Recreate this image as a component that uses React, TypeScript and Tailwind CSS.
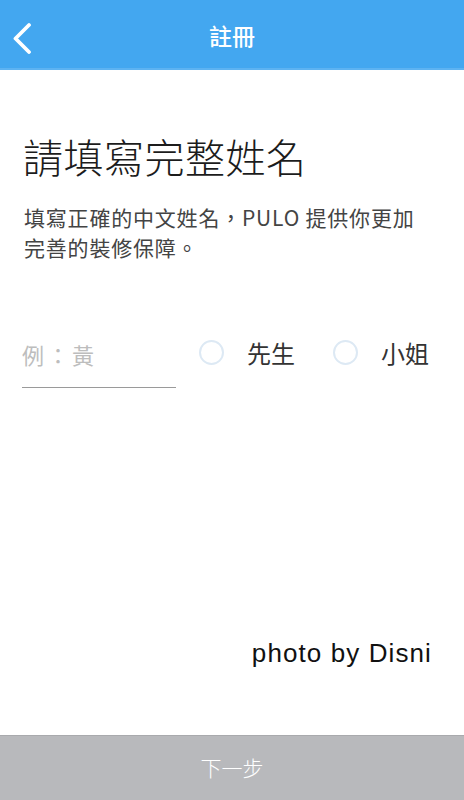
import { useState } from 'react'

const font = { fontFamily: '"Noto Sans CJK TC", "Liberation Sans", sans-serif' }

function Radio({ label, checked, onClick }: { label: string; checked: boolean; onClick: () => void }) {
  return (
    <button onClick={onClick} className="flex items-center gap-[23px]">
      <span className="w-[25px] h-[25px] rounded-full border-2 border-[#dde9f4] flex items-center justify-center">
        {checked && <span className="w-[13px] h-[13px] rounded-full bg-[#43a7f0]" />}
      </span>
      <span className="text-[24px] text-[#333] leading-none">{label}</span>
    </button>
  )
}

export default function App() {
  const [name, setName] = useState('')
  const [gender, setGender] = useState<'' | 'm' | 'f'>('')

  return (
    <div className="w-[464px] h-[800px] bg-white flex flex-col" style={font}>
      {/* Header */}
      <header className="h-[70px] bg-[#43a7f0] border-b-2 border-[#5db3f2] flex items-center relative shrink-0">
        <button className="absolute left-[10px] top-[22px] text-white">
          <svg width="24" height="32" viewBox="0 0 24 32" fill="none">
            <path d="M19 3L5.5 16.5 19 30" stroke="currentColor" strokeWidth="3.8" strokeLinecap="round" strokeLinejoin="round" />
          </svg>
        </button>
        <h1 className="flex-1 text-center text-white text-[23px] font-medium pt-[3px]">註冊</h1>
      </header>

      <main className="flex-1 pl-6 pr-[24px] pt-[66px]">
        <h2 className="text-[40px] leading-none font-light text-[#1c1c1c] -ml-[1px] tracking-[0.5px]">請填寫完整姓名</h2>
        <p className="mt-[26px] text-[21px] leading-[30px] text-[#444] tracking-[0.8px] pr-[14px]">
          填寫正確的中文姓名，PULO 提供你更加完善的裝修保障。
        </p>

        {/* Name row */}
        <div className="mt-[73px] flex items-start -ml-[2px]">
          <input
            value={name}
            onChange={(e) => setName(e.target.value)}
            placeholder="例：黃"
            className="w-[154px] h-[53px] border-b border-[#9a9a9a] outline-none text-[22px] tracking-[3px] text-[#333] placeholder-[#bdbdbd] pb-[14px] bg-transparent"
          />
          <div className="flex items-center gap-[38px] ml-[23px] mt-[5px]">
            <Radio label="先生" checked={gender === 'm'} onClick={() => setGender('m')} />
            <Radio label="小姐" checked={gender === 'f'} onClick={() => setGender('f')} />
          </div>
        </div>

        <div className="mt-[246px] flex justify-end pr-[8px]">
          <span
            className="text-[26px] text-[#111] tracking-[1.1px]"
            style={{ fontFamily: '"Liberation Sans", sans-serif', textShadow: '1px 1px 0 #fff, -1px -1px 0 #fff' }}
          >
            photo by Disni
          </span>
        </div>
      </main>

      {/* Footer */}
      <button className="h-[65px] bg-[#b8b9bc] border-t border-[#a9aaad] text-white text-[21px] font-light shrink-0">
        下一步
      </button>
    </div>
  )
}
